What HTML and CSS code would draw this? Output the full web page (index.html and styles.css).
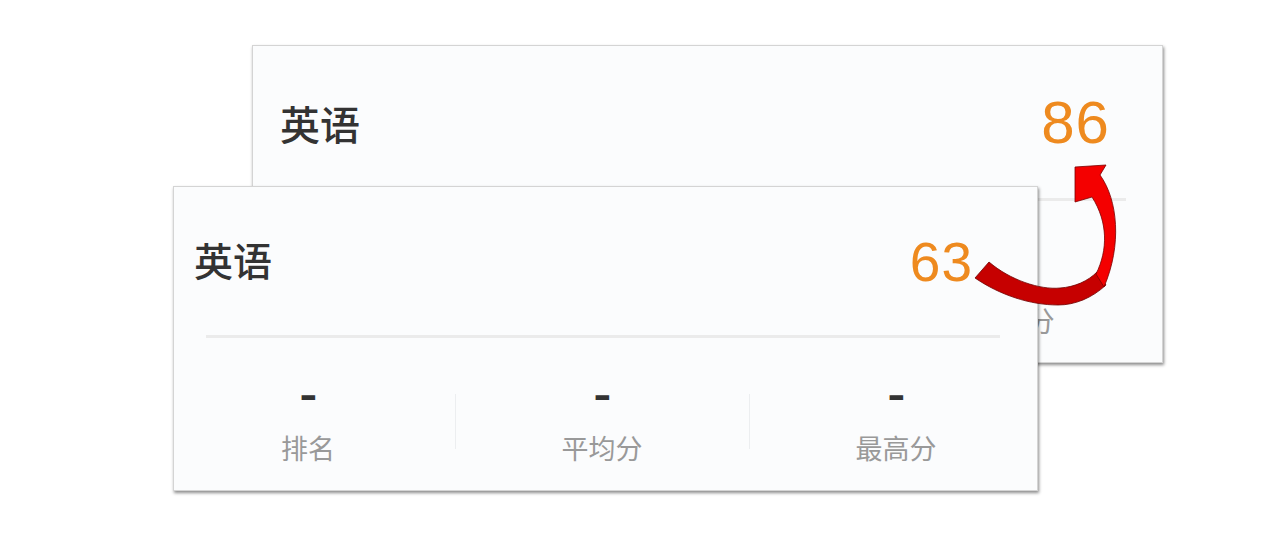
FILE: index.html
```html
<!DOCTYPE html>
<html lang="zh-CN">
<head>
    <meta charset="UTF-8">
    <title>成绩对比</title>
    <link rel="stylesheet" href="styles.css">
</head>
<body>

<div class="stage">
    <!-- after: the card behind -->
    <div class="card card-back">
        <div class="card-head">
            <span class="subject">英语</span>
            <span class="score">86</span>
        </div>
        <div class="divider"></div>
        <div class="stats">
            <div class="stat"><span class="stat-value">-</span><span class="stat-label">排名</span></div>
            <div class="stat"><span class="stat-value">-</span><span class="stat-label">平均分</span></div>
            <div class="stat"><span class="stat-value">-</span><span class="stat-label">最高分</span></div>
        </div>
    </div>

    <!-- before: the card in front -->
    <div class="card card-front">
        <div class="card-head">
            <span class="subject">英语</span>
            <span class="score">63</span>
        </div>
        <div class="divider"></div>
        <div class="stats">
            <div class="stat"><span class="stat-value">-</span><span class="stat-label">排名</span></div>
            <div class="stat"><span class="stat-value">-</span><span class="stat-label">平均分</span></div>
            <div class="stat"><span class="stat-value">-</span><span class="stat-label">最高分</span></div>
        </div>
    </div>

    <svg class="arrow" viewBox="0 0 1280 544" width="1280" height="544">
        <path class="arrow-front" d="M 989 262 C 1010 280, 1040 290, 1060 288 C 1075 287, 1088 281, 1097 272 L 1106 285 C 1092 298, 1075 305, 1058 305 C 1030 305, 1000 295, 975 278 Z"/>
        <path class="arrow-back" d="M 1096 274 C 1108 250, 1108 222, 1092 197 L 1075 202 L 1075 167 L 1106 165 L 1100 175 C 1118 200, 1122 245, 1104 287 Z"/>
    </svg>
</div>

</body>
</html>
```

FILE: styles.css
```css
body {
    margin: 0;
    background: #fff;
    font-family: "Liberation Sans", "Noto Sans CJK SC", sans-serif;
}
.stage {
    position: relative;
    width: 1280px;
    height: 544px;
    overflow: hidden;
}
.card {
    position: absolute;
    box-sizing: border-box;
    background: #fbfcfd;
    border: 1px solid #d4d4d4;
    box-shadow: 1px 2px 3px rgba(0, 0, 0, 0.45);
}
.card-front {
    left: 173px;
    top: 186px;
    width: 865px;
    height: 305px;
}
.card-back {
    left: 252px;
    top: 45px;
    width: 911px;
    height: 318px;
}
.card-head {
    display: flex;
    justify-content: space-between;
    align-items: center;
    box-sizing: border-box;
    height: 148px;
    padding: 2px 64px 0 20px;
}
.card-back .card-head {
    height: 152px;
    padding: 1px 52px 0 27px;
}
.subject {
    margin-bottom: 6px;
    font-family: "Noto Sans CJK SC", sans-serif;
    font-size: 39px;
    font-weight: 500;
    color: #333;
}
.card-back .subject {
    margin-bottom: 0;
    font-size: 40px;
}
.score {
    font-size: 55px;
    letter-spacing: 1px;
    color: #ee8a1f;
}
.card-back .score {
    font-size: 60px;
}
.divider {
    height: 3px;
    margin: 0 37px 0 32px;
    background: #ebebeb;
}
.card-back .divider {
    margin: 0 36px 0 36px;
}
.stats {
    display: grid;
    grid-template-columns: repeat(3, 1fr);
    margin: 0 -6px 0 -13px;
    padding-top: 42px;
}
.card-back .stats {
    margin: 0 -5px 0 -12px;
    padding-top: 50px;
}
.stat {
    position: relative;
    display: flex;
    flex-direction: column;
    align-items: center;
    gap: 23px;
}
.stat + .stat::before {
    content: "";
    position: absolute;
    left: 0;
    top: 14px;
    bottom: 14px;
    border-left: 1px solid #eceef0;
}
.stat-value {
    display: inline-block;
    font-size: 38px;
    font-weight: bold;
    line-height: 30px;
    color: #333;
    transform: scaleX(1.4);
}
.stat-label {
    font-family: "Noto Sans CJK SC", sans-serif;
    font-size: 27px;
    line-height: 30px;
    color: #999;
}
.card-back .stat-label {
    font-size: 28px;
    line-height: 32px;
}
.arrow {
    position: absolute;
    left: 0;
    top: 0;
}
.arrow-front {
    fill: #c60000;
    stroke: #6e0000;
    stroke-width: 0.8;
}
.arrow-back {
    fill: #f40000;
    stroke: #7a0000;
    stroke-width: 0.8;
}
```
